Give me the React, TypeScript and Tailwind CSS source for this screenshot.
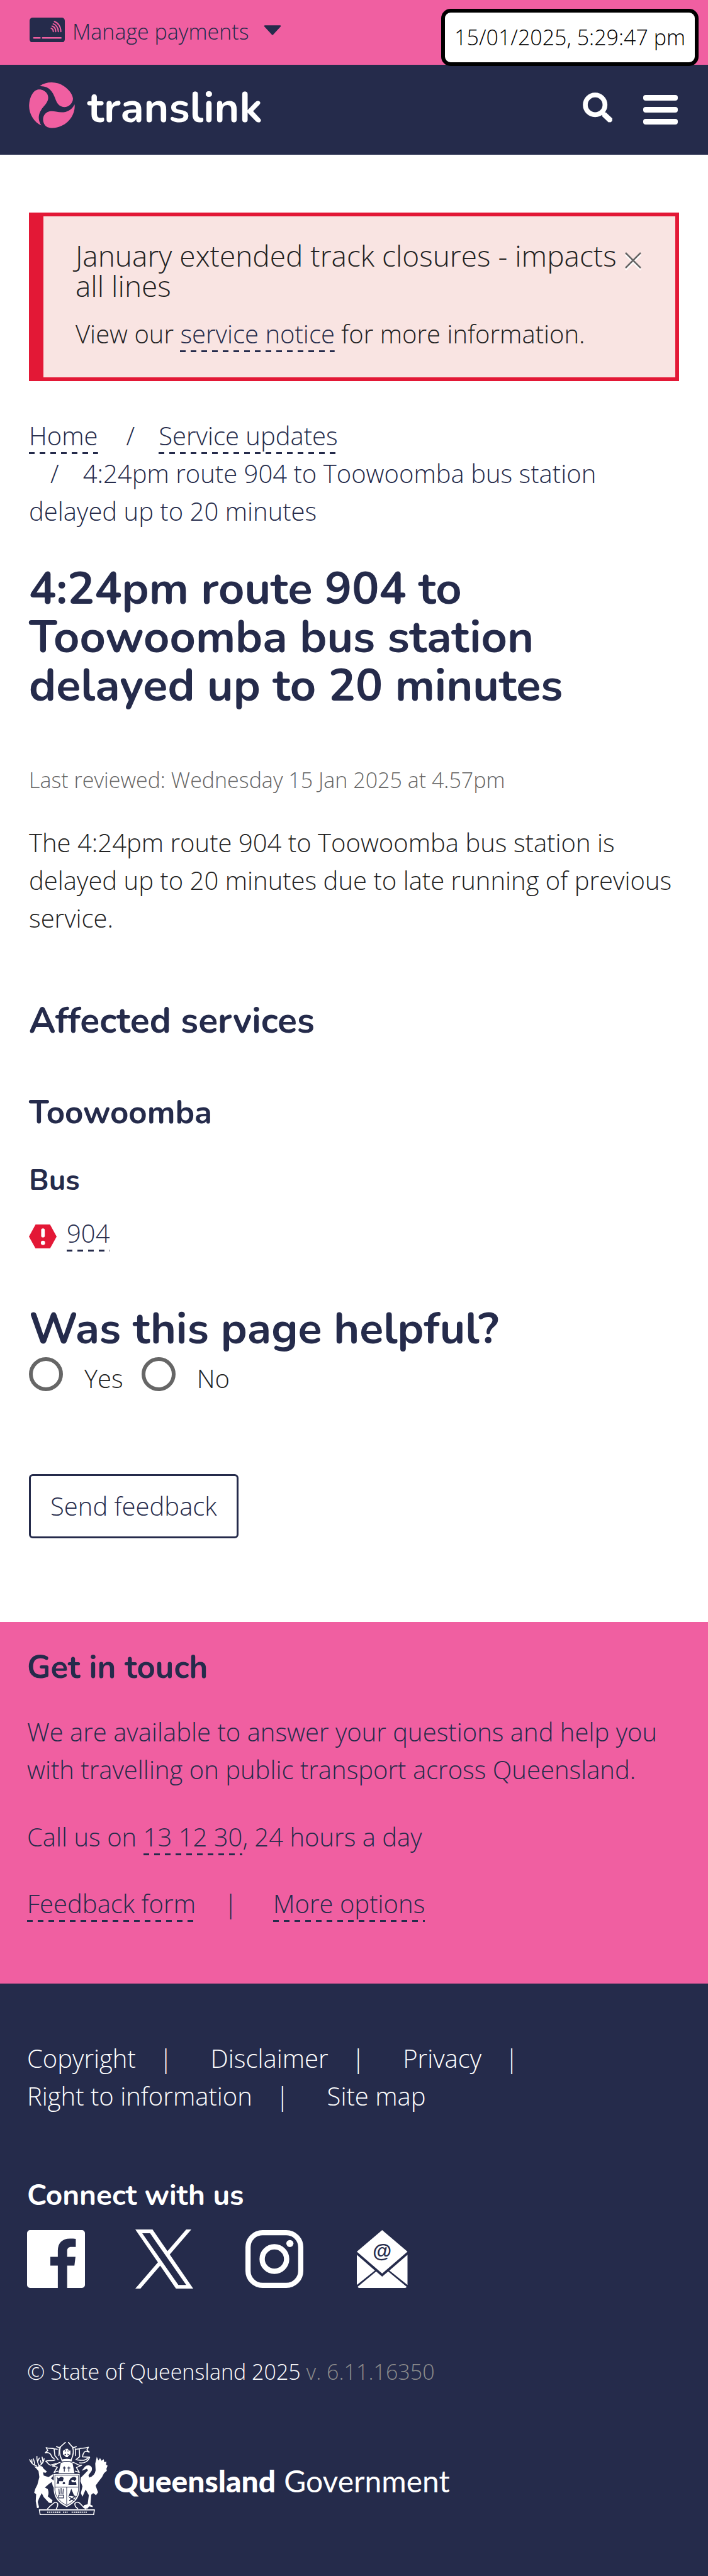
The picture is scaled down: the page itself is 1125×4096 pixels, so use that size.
import React from "react";

const dashed =
  "bg-[repeating-linear-gradient(90deg,#252b4b_0_9px,transparent_9px_17px)] bg-[length:100%_3px] bg-bottom bg-no-repeat pb-0.5";

function DashLink({ href, children }: { href: string; children: React.ReactNode }) {
  return (
    <a href={href} className={dashed}>
      {children}
    </a>
  );
}

function CardIcon() {
  return (
    <svg viewBox="0 0 58 41" className="w-14 shrink-0" aria-hidden="true">
      <rect width="58" height="41" rx="5" fill="#252b4b" />
      <g fill="none" stroke="#f05fa1" strokeWidth="2" strokeLinecap="round">
        <path d="M40.8 6.5C47 8.5 51.500 15 51.500 23" />
        <path d="M38.900 10.300C43.500 11.700 47.300 17 47.300 23" />
        <path d="M37 14C40.500 15 43 18.500 43 23" />
        <path d="M35.400 17.500C37.500 18.300 39 20.300 39 23" />
        <path d="M7 33.300H17M21.500 33.300H51.500" strokeWidth="2.600" />
      </g>
    </svg>
  );
}

function TranslinkLogo() {
  const petal =
    "M18 6.300C29-2 47-2 59 6.500C67 12 72.500 19 73.700 26.500C74.500 34 67 41.500 59 41.300C50 41 46.500 34 44 27C40 15 33 5.500 18 6.300Z";
  return (
    <>
      <svg viewBox="0 0 77 77" className="w-[73px] shrink-0" aria-hidden="true" fill="#f05fa1">
        <path d={petal} />
        <path d={petal} transform="rotate(120 38.400 38.500)" />
        <path d={petal} transform="rotate(240 38.400 38.500)" />
      </svg>
      <span className="ml-5 pt-2 font-[Nunito,sans-serif] text-[68px] leading-[78px] font-bold text-white">translink</span>
    </>
  );
}

function SearchIcon() {
  return (
    <svg viewBox="0 0 50 50" className="h-12 w-12" aria-hidden="true" fill="none" stroke="#fff">
      <circle cx="20.500" cy="20.500" r="16.300" strokeWidth="8" />
      <path d="M35 36L46 46.500" strokeWidth="9" strokeLinecap="butt" />
      <path d="M36 37L45 45.500" strokeWidth="7.500" strokeLinecap="round" />
    </svg>
  );
}

function FacebookIcon() {
  return (
    <svg viewBox="0 0 96 96" className="h-[92px] w-[92px]" aria-hidden="true">
      <path
        fill="#fff"
        d="M5 0H91A5 5 0 0 1 96 5V91A5 5 0 0 1 91 96H66.500V59H78.500L80.300 44.300H66.500V35C66.500 30.500 68.500 28 73.500 28H80.800V14.500C78 14 75 14 71 14C58.500 14 51 21.500 51 34V44.300H38.600V59H51V96H5A5 5 0 0 1 0 91V5A5 5 0 0 1 5 0Z"
      />
    </svg>
  );
}

function XIcon() {
  return (
    <svg viewBox="0 0 24 24" className="h-[94px] w-[94px]" aria-hidden="true">
      <path
        fill="#fff"
        d="M14.234 10.162 22.977 0h-2.072l-7.591 8.824L7.251 0H.258l9.168 13.343L.258 24H2.330l8.016-9.318L16.749 24h6.993zm-2.837 3.299-.929-1.329L3.076 1.560h3.182l5.965 8.532.929 1.329 7.754 11.090h-3.182z"
      />
    </svg>
  );
}

function InstagramIcon() {
  return (
    <svg viewBox="0 0 96 96" className="h-[92px] w-[92px]" aria-hidden="true" fill="none" stroke="#fff">
      <rect x="4.300" y="4.300" width="87.400" height="87.400" rx="24" strokeWidth="8.600" />
      <circle cx="48" cy="48" r="20.300" strokeWidth="8.800" />
      <circle cx="73.700" cy="22.300" r="5.900" fill="#fff" stroke="none" />
    </svg>
  );
}

function MailIcon() {
  return (
    <svg viewBox="0 0 84 96" className="h-[92px]" aria-hidden="true" fill="#fff">
      <path d="M42 0L84 35.700L42 72L0 35.700Z" />
      <path d="M0 41L30 67L0 91Z" />
      <path d="M84 41L54 67L84 91Z" />
      <path d="M32 68.500L42 77.300L52 68.500L82.500 94Q82 96 80 96H4Q2 96 1.500 94Z" />
      <text
        x="42"
        y="45.500"
        fontSize="32"
        fontWeight="700"
        textAnchor="middle"
        fill="#252b4b"
        fontFamily="'Liberation Sans', sans-serif"
      >
        @
      </text>
    </svg>
  );
}

function Crest() {
  return (
    <svg viewBox="54 62 394 366" className="w-[125px] shrink-0" aria-hidden="true">
      <g fill="none" stroke="#fff" strokeWidth="5" strokeLinecap="round" strokeLinejoin="round">
        {/* antlers */}
        <path d="M92 182C74 176 64 166 58 150M70 170L68 150M82 177C84 164 80 158 76 146M104 180C98 166 92 150 94 134M97 160L106 142M108 180C120 172 128 162 130 146M116 172L112 156M124 160L120 138" />
        {/* crest and mantling */}
        <path d="M192 85L206 90L214 84L236 64M291 85L277 90L269 84L252 64" />
        <path d="M212 86C206 104 208 130 218 150M272 86C278 104 276 130 266 150" />
        <path d="M196 98L180 96C170 90 158 96 140 90L148 104L136 116C154 112 164 120 168 136L180 146M180 96L184 130L200 150M206 96L204 130" />
        <path d="M290 98L306 96C318 90 330 96 352 88L344 102L356 112L338 108C328 112 324 124 322 136L358 138C350 160 330 170 308 166M306 96L308 136L290 150M286 96L288 130" />
        <path d="M184 152C170 160 156 150 138 158C146 162 150 176 162 178L190 170M296 152C318 152 330 160 350 142M210 164C190 170 178 184 172 182L196 188L180 214L200 208M274 164C296 170 306 184 318 178L292 190L306 214L286 208" />
      </g>
      <g fill="#fff">
        <path d="M237 96H250L247 110L262 104V126L247 120L250 138H237L240 120L224 126V104L240 110Z" />
        <path d="M216 150Q243 142 270 150L268 160Q243 154 218 160ZM214 166Q243 158 272 166L282 218H202Z" />
        <circle cx="243" cy="116" r="16" fill="none" stroke="#fff" strokeWidth="4" />
        {/* deer */}
        <path d="M80 184L96 186Q106 178 120 184L128 196L144 210L138 216L124 214L128 230L152 238L176 222L174 234L164 244L180 256L184 296L174 284L168 262L152 274L134 290L148 298Q156 318 148 334L172 354L168 368L154 366L128 338L118 318L104 346L98 362L104 386L102 394L94 392L88 358L90 324L80 316L86 296L96 276L106 238L102 208L92 196Z" />
        {/* bird */}
        <path d="M318 206L334 186Q344 176 360 180Q374 188 368 206L352 228L356 240Q384 232 388 204L386 170L394 136L402 154L410 142L418 156L428 148L432 164L442 160L440 176L448 180L442 196L444 206L430 218L420 238L404 258L388 280L400 314L390 328L376 318L366 326L362 376L372 380L374 388L356 384L346 396L326 392L330 378L348 374L354 328L338 300L322 336L314 318L322 284L312 258L314 240L330 224L350 204L344 196Z" />
        {/* shield */}
        <path d="M178 222H308V304Q304 360 243 388Q182 360 178 304Z" />
      </g>
      <g fill="none" stroke="#252b4b" strokeWidth="3">
        <path d="M184 228H302V304Q298 352 243 380Q188 352 184 304ZM184 288H302M243 288V380" />
        <path d="M231 184V210M224 192H238M254 184V210M247 192H261" strokeWidth="4" />
        <path d="M204 296L206 324M215 292V322M226 296L224 324M203 328H227V342H203Z" strokeWidth="4" />
        <path d="M256 338L282 356M282 338L256 356" strokeWidth="5" />
      </g>
      <g fill="#252b4b">
        <path d="M194 238L204 244Q214 230 228 242L224 258L204 258L206 270L192 272Q200 256 194 238Z" />
        <circle cx="229" cy="268" r="6" />
        <path d="M254 262Q258 242 274 238Q290 234 292 248L282 258Q276 246 266 254Q266 268 290 262L292 276H252Z" />
        <path d="M254 330L266 296L280 330Q290 330 290 342Q268 326 250 336Z" />
      </g>
      {/* scroll */}
      <g fill="none" stroke="#fff" strokeWidth="5" strokeLinejoin="round">
        <path d="M106 402H382L378 426H110Z" />
        <path d="M146 398Q162 380 176 370Q188 358 198 370Q200 384 190 398M340 398Q322 384 310 370Q294 356 284 370Q282 388 300 396" />
      </g>
      <path d="M146 414H212M226 414H248M268 414H346" stroke="#fff" strokeWidth="8" strokeDasharray="5 5" />
    </svg>
  );
}

function Footer() {
  return (
    <footer>
      <section className="bg-[#f05fa1] px-[43px] pt-[42px] pb-[97px] text-[#252b4b]">
        <h2 className="font-[Nunito,sans-serif] text-[51px] leading-[60px] font-bold">Get in touch</h2>
        <p className="mt-[43px]">
          We are available to answer your questions and help you with travelling on public transport across Queensland.
        </p>
        <p className="mt-[47px]">
          Call us on <DashLink href="#call">13 12 30</DashLink>, 24 hours a day
        </p>
        <p className="mt-[46px] flex">
          <span>
            <DashLink href="#feedback">Feedback form</DashLink>
          </span>
          <span className="w-[123px] pr-3 text-center">|</span>
          <span>
            <DashLink href="#options">More options</DashLink>
          </span>
        </p>
      </section>

      <section className="bg-[#252b4b] px-[43px] pt-[89px] pb-24 text-white">
        <ul className="flex max-w-[900px] flex-wrap">
          <li><a href="#copyright">Copyright</a><span className="pr-12 pl-[37px]">|</span></li>
          <li className="pl-3"><a href="#disclaimer">Disclaimer</a><span className="pr-12 pl-[37px]">|</span></li>
          <li className="pl-3"><a href="#privacy">Privacy</a><span className="pl-[37px]">|</span></li>
          <li><a href="#rti">Right to information</a><span className="pr-12 pl-[37px]">|</span></li>
          <li className="pl-3"><a href="#sitemap">Site map</a></li>
        </ul>

        <h2 className="mt-[98px] font-[Nunito,sans-serif] text-[46px] leading-[60px] font-bold">Connect with us</h2>
        <div className="mt-[25px] flex h-[92px] items-center">
          <a href="#facebook" aria-label="Facebook"><FacebookIcon /></a>
          <a href="#x" aria-label="X" className="ml-[79px]"><XIcon /></a>
          <a href="#instagram" aria-label="Instagram" className="ml-[82px]"><InstagramIcon /></a>
          <a href="#email" aria-label="Email" className="ml-[85px]"><MailIcon /></a>
        </div>

        <p className="mt-[107px] text-[34px] leading-[52px]">
          © State of Queensland 2025 <span className="text-[#8c8c8c]">v. 6.11.16350</span>
        </p>

        <a href="#qld" className="mt-[86px] flex h-[116px] items-center pl-[3px] font-[Lato,sans-serif] text-[48px] leading-[60px]">
          <Crest />
          <span className="ml-2.5 pt-2">
            <b className="font-black">Queensland</b> <span className="font-normal">Government</span>
          </span>
        </a>
      </section>
    </footer>
  );
}

export default function App() {
  const heading = "font-[Nunito,sans-serif] font-bold text-[#252b4b]";
  return (
    <div className="relative min-h-screen bg-[#252b4b] font-['Open_Sans',sans-serif] text-[40px] leading-[60px] font-light text-[#222]">
      <div className="flex h-[103px] items-center bg-[#f05fa1] pb-2 pl-[47px] text-[#252b4b]">
        <button type="button" className="flex items-center text-[34px] font-light">
          <CardIcon />
          <span className="mt-1 ml-3">Manage payments</span>
          <svg viewBox="0 0 28 16" className="ml-6 w-7" aria-hidden="true">
            <path d="M2 1.500H26L14 14.500Z" fill="#252b4b" stroke="#252b4b" strokeWidth="2.500" strokeLinejoin="round" />
          </svg>
        </button>
      </div>
      <time className="absolute top-3.5 right-[15px] rounded-[15px] border-[6px] border-black bg-white px-[15px] text-[34px] leading-[79px] text-black">
        15/01/2025, 5:29:47 pm
      </time>

      <header className="flex h-[143px] items-center bg-[#252b4b] pr-12 pb-3.5 pl-[46px]">
        <a href="#home" className="flex items-center"><TranslinkLogo /></a>
        <button type="button" aria-label="Search" className="mt-1.5 ml-auto"><SearchIcon /></button>
        <button type="button" aria-label="Menu" className="mt-3.5 ml-12 flex w-[55px] flex-col gap-2.5">
          <span className="h-[9px] w-full rounded-sm bg-white" />
          <span className="h-[9px] w-full rounded-sm bg-white" />
          <span className="h-[9px] w-full rounded-sm bg-white" />
        </button>
      </header>

      <main className="bg-white px-[46px] pt-[92px] pb-[133px]">
        <section role="alert" className="flex items-start border-[6px] border-l-[23px] border-[#e31836] bg-[#f9e4e2] pt-[38px] pr-[68px] pb-[39px] pl-[51px]">
          <div className="flex-1">
            <h2 className="text-[46px] leading-[48px]">January extended track closures - impacts all lines</h2>
            <p className="mt-[23px]">
              View our <span className="text-[#252b4b]"><DashLink href="#notice">service notice</DashLink></span> for more information.
            </p>
          </div>
          <button type="button" aria-label="Close" className="mt-[19px] -mr-[14px] shrink-0">
            <svg viewBox="0 0 26 29" className="w-[26px]" aria-hidden="true" fill="none" strokeWidth="2.500">
              <path d="M1 4L25 28M25 4L1 28" stroke="#fff" />
              <path d="M1 1L25 25M25 1L1 25" stroke="#666" />
            </svg>
          </button>
        </section>

        <nav aria-label="Breadcrumb" className="mt-[57px] text-[#252b4b]">
          <ol>
            <li className="inline">
              <DashLink href="#home">Home</DashLink>
            </li>
            <li className="inline before:pr-[38px] before:pl-[45px] before:content-['/']">
              <DashLink href="#updates">Service updates</DashLink>
            </li>
            <li className="before:pr-[38px] before:pl-[34px] before:content-['/']">
              4:24pm route 904 to Toowoomba bus station delayed up to 20 minutes
            </li>
          </ol>
        </nav>

        <h1 className={`${heading} mt-[55px] max-w-[900px] text-[72px] leading-[77px]`}>
          4:24pm route 904 to Toowoomba bus station delayed up to 20 minutes
        </h1>
        <p className="mt-[85px] text-[34px] leading-[52px] text-[#666]">
          Last reviewed: Wednesday 15 Jan 2025 at 4.57pm
        </p>
        <p className="mt-11">
          The 4:24pm route 904 to Toowoomba bus station is delayed up to 20 minutes due to late running of previous service.
        </p>

        <h2 className={`${heading} mt-[103px] text-[57px] leading-[60px]`}>Affected services</h2>
        <h3 className={`${heading} mt-[86px] text-[51px] leading-[60px]`}>Toowoomba</h3>
        <h4 className={`${heading} mt-12 text-[46px] leading-[60px]`}>Bus</h4>
        <div className="mt-6 flex items-center text-[#252b4b]">
          <svg viewBox="0 0 46 40" className="mt-2.5 w-11" role="img" aria-label="Major disruption">
            <path d="M11 0H35L46 20L35 40H11L0 20Z" fill="#e31836" />
            <path d="M23.300 9.500V18.500" stroke="#fff" strokeWidth="6" strokeLinecap="round" />
            <circle cx="23.300" cy="30.500" r="3.500" fill="#fff" />
          </svg>
          <span className="ml-4"><DashLink href="#904">904</DashLink></span>
        </div>

        <form className="mt-[84px]" onSubmit={(e) => e.preventDefault()}>
          <fieldset>
            <legend className={`${heading} text-[70px] leading-[76px]`}>Was this page helpful?</legend>
            <div className="flex pt-[7px]">
              <label className="flex items-start">
                <input type="radio" name="helpful" className="size-[54px] appearance-none rounded-full border-[6px] border-[#666] checked:bg-[#252b4b]" />
                <span className="mt-1 ml-[34px]">Yes</span>
              </label>
              <label className="ml-[29px] flex items-start">
                <input type="radio" name="helpful" className="size-[54px] appearance-none rounded-full border-[6px] border-[#666] checked:bg-[#252b4b]" />
                <span className="mt-1 ml-[34px]">No</span>
              </label>
            </div>
          </fieldset>
          <button type="submit" className="mt-[122px] block rounded-md border-[3px] border-[#252b4b] px-[31px] py-[18px] font-light text-[#252b4b]">
            Send feedback
          </button>
        </form>
      </main>

      <Footer />
    </div>
  );
}
